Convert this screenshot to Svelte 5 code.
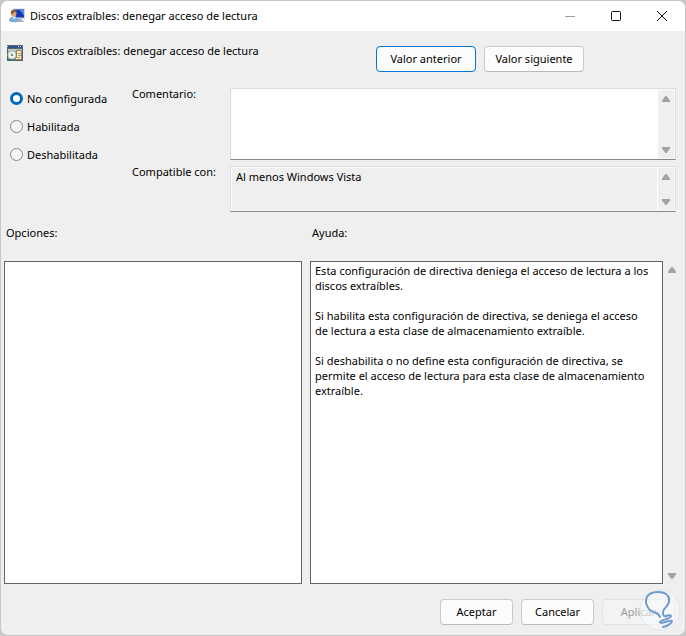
<script lang="ts">
  const title = 'Discos extraíbles: denegar acceso de lectura';

  const states = [
    { value: 'none', label: 'No configurada' },
    { value: 'enabled', label: 'Habilitada' },
    { value: 'disabled', label: 'Deshabilitada' },
  ];

  const help = [
    'Esta configuración de directiva deniega el acceso de lectura a los discos extraíbles.',
    'Si habilita esta configuración de directiva, se deniega el acceso de lectura a esta clase de almacenamiento extraíble.',
    'Si deshabilita o no define esta configuración de directiva, se permite el acceso de lectura para esta clase de almacenamiento extraíble.',
  ];

  let selected = $state('none');
  let comment = $state('');
</script>

{#snippet scrollbar()}
  <div class="scrollbar">
    <button type="button" aria-label="Desplazar hacia arriba">
      <svg width="8" height="6" viewBox="0 0 8 6"><path d="M3.4 0h1.2L8 4.6V6H0V4.6z" fill="#a3a3a3" /></svg>
    </button>
    <button type="button" aria-label="Desplazar hacia abajo">
      <svg width="8" height="6" viewBox="0 0 8 6"><path d="M3.4 6h1.2L8 1.4V0H0v1.4z" fill="#a3a3a3" /></svg>
    </button>
  </div>
{/snippet}

<div class="window">
  <header class="titlebar">
    <svg width="16" height="16" viewBox="0 0 16 16">
      <path d="M4 .5h12v10.500H4z" fill="#cfd3da" />
      <path d="M5 1.500h10V9.500H5z" fill="#1536b8" />
      <path d="M10 1.500h5v6z" fill="#5585ea" />
      <path d="M9 11h4v1.500l2 .5v1H8z" fill="#aeb1b8" />
      <path d="M0 13c0-3 1.500-4.500 5-4.500s5 1.500 5 4.500c-2 1.800-8 1.800-10 0z" fill="#79aedb" />
      <path d="M3.500 8.500l1.800 3 1.700-3z" fill="#eef6fc" />
      <ellipse cx="4.800" cy="5.600" rx="2.700" ry="3.200" fill="#dba676" />
      <path d="M2 6C1.200 3 2.800 1.500 5 1.800c2 .2 3 1.200 2.600 2.600C6 3.900 4 4 3.500 6.500z" fill="#865f3c" />
    </svg>
    <h1>{title}</h1>
    <div class="controls">
      <button type="button" aria-label="Minimizar" disabled>
        <svg width="12" height="12" viewBox="0 0 12 12"><path d="M1 6.500h10" stroke="#a2a2a2" /></svg>
      </button>
      <button type="button" aria-label="Maximizar">
        <svg width="12" height="12" viewBox="0 0 12 12"><rect x="1.500" y="1.500" width="9" height="9" rx="1" fill="none" stroke="#111" /></svg>
      </button>
      <button type="button" aria-label="Cerrar">
        <svg width="12" height="12" viewBox="0 0 12 12"><path d="M1 1l10 10M11 1L1 11" stroke="#111" /></svg>
      </button>
    </div>
  </header>

  <div class="policy">
    <div class="policy-name">
      <svg width="16" height="16" viewBox="0 0 16 16">
        <rect width="16" height="16" fill="#4f646d" />
        <path d="M1 1h14v2H1z" fill="#34518c" />
        <path d="M0 1h1v1H0zM11 1h1v1h-1zM13 1h1v1h-1z" fill="#d5dce0" />
        <path d="M1 4h14v2H1z" fill="#bfc5c7" />
        <path d="M1 6h14v8H1z" fill="#8d999c" />
        <circle cx="5" cy="10" r="4" fill="#f0f4ef" stroke="#b4c4b6" />
        <path d="M5 10l-3-2.500L4 6z" fill="#c5e3c3" />
        <circle cx="5" cy="10" r="1" fill="#53645b" />
        <path d="M9.500 5.500h5v9h-6v-2h1z" fill="#f8eccb" stroke="#96805a" />
        <path d="M11 8.500h3M11 10.500h3M10 12.500h3" stroke="#a8946c" />
        <path d="M0 15h8v1H0z" fill="#267b83" />
      </svg>
      <span>{title}</span>
    </div>
    <div class="policy-nav">
      <button type="button" class="btn wide primary">Valor anterior</button>
      <button type="button" class="btn wide">Valor siguiente</button>
    </div>
  </div>

  <div class="settings">
    <div class="states" role="radiogroup" aria-label="Estado">
      {#each states as state}
        <label>
          <input type="radio" name="state" value={state.value} bind:group={selected} />
          {state.label}
        </label>
      {/each}
    </div>

    <div class="fields">
      <label for="comment">Comentario:</label>
      <div class="field comment">
        <textarea id="comment" bind:value={comment}></textarea>
        {@render scrollbar()}
      </div>
      <label for="supported">Compatible con:</label>
      <div class="field supported">
        <textarea id="supported" readonly value="Al menos Windows Vista"></textarea>
        {@render scrollbar()}
      </div>
    </div>
  </div>

  <main class="panels">
    <section>
      <h2>Opciones:</h2>
      <div class="box"></div>
    </section>
    <section>
      <h2>Ayuda:</h2>
      <div class="help">
        <div class="box">
          {#each help as paragraph}
            <p>{paragraph}</p>
          {/each}
        </div>
        {@render scrollbar()}
      </div>
    </section>
  </main>

  <footer>
    <button type="button" class="btn">Aceptar</button>
    <button type="button" class="btn">Cancelar</button>
    <button type="button" class="btn" disabled>Aplicar</button>
    <svg class="badge" width="42" height="42" viewBox="0 0 42 42">
      <circle cx="21" cy="21" r="20" fill="#f9fbfd" fill-opacity=".5" stroke="#dce5ee" />
      <path
        d="M21 28C19 22 14 25 10 20C4 12 7 3 19 3C28 3 31 8 30 13C29 18 23 20 24 24C24 26 25 28 27 27C29 26 32 26 32 27C32 30 21 31 21 33C21 36 32 30 33 32C33 34 29 37 24 38"
        fill="none"
        stroke="#6f9bcb"
        stroke-width="2"
        stroke-linecap="round"
        stroke-linejoin="round"
      />
    </svg>
  </footer>
</div>

<style>
  :global(body) {
    margin: 0;
    background: #c8c8c8;
  }

  .window {
    display: flex;
    flex-direction: column;
    box-sizing: border-box;
    min-height: 100vh;
    border: 1px solid #c8c8c8;
    border-radius: 8px;
    background: #efefef;
    color: #000;
    font: 11px/15px 'Noto Sans', 'Open Sans', sans-serif;
    overflow: hidden;
  }

  button,
  textarea {
    font: inherit;
    color: inherit;
  }

  h1,
  h2 {
    margin: 0;
    font-size: 11px;
    font-weight: 400;
  }

  .titlebar {
    display: flex;
    align-items: center;
    height: 30px;
    padding-left: 8px;
    gap: 5px;
    background: #fff;
  }

  .titlebar h1 {
    padding-bottom: 2px;
  }

  .controls {
    display: flex;
    align-self: stretch;
    margin-left: auto;
  }

  .controls button {
    display: grid;
    place-items: center;
    width: 46px;
    padding: 0;
    border: 0;
    background: none;
  }

  .policy {
    display: grid;
    grid-template-columns: 375fr 309fr;
    padding-top: 12px;
  }

  .policy-name {
    display: flex;
    gap: 8px;
    padding-left: 6px;
  }

  .policy-name svg {
    margin-top: 2px;
  }

  .policy-nav {
    display: flex;
    gap: 8px;
    padding-top: 3px;
  }

  .btn {
    width: 73px;
    height: 26px;
    padding: 0 0 2px;
    border: 1px solid #cacaca;
    border-bottom-color: #bababa;
    border-radius: 4px;
    background: #fcfcfc;
  }

  .btn.wide {
    width: 100px;
  }

  .btn.primary {
    border-color: #0078d4;
  }

  .btn:disabled {
    border-color: #e0e0e0;
    background: #f3f3f3;
    color: #9c9c9c;
  }

  .settings {
    display: grid;
    grid-template-columns: 122px 1fr;
    padding: 14px 9px 0;
  }

  .states {
    display: flex;
    flex-direction: column;
    gap: 13px;
    padding-top: 5px;
  }

  .states label {
    display: flex;
    align-items: center;
    gap: 4px;
  }

  .states input {
    appearance: none;
    box-sizing: border-box;
    width: 13px;
    height: 13px;
    margin: 0;
    border: 1px solid #868686;
    border-radius: 50%;
    background: #f5f5f5;
  }

  .states input:checked {
    border: 3px solid #0067c0;
    background: #fff;
  }

  .fields {
    display: grid;
    grid-template-columns: 98px 1fr;
    row-gap: 4px;
  }

  .field {
    display: flex;
    box-sizing: border-box;
    margin-top: 2px;
    padding: 1px;
    border: 1px solid #dedede;
    border-bottom-color: #868686;
    background: #efefef;
    box-shadow: inset 0 0 0 1px #fafafa;
  }

  .field.comment {
    height: 72px;
  }

  .field.supported {
    height: 46px;
  }

  .field textarea {
    flex: 1;
    min-width: 0;
    padding: 1px 4px;
    border: 0;
    outline: 0;
    background: transparent;
    resize: none;
    overflow: hidden;
  }

  .comment textarea {
    background: #fff;
  }

  .supported textarea {
    border-right: 1px solid #fff;
  }

  .scrollbar {
    display: flex;
    flex-direction: column;
    justify-content: space-between;
    width: 16px;
  }

  .scrollbar button {
    display: grid;
    place-items: center;
    height: 17px;
    padding: 0;
    border: 0;
    background: none;
  }

  .panels {
    display: grid;
    grid-template-columns: 298fr 371fr;
    flex: 1;
    gap: 8px;
    padding: 13px 4px 0 3px;
  }

  section {
    display: flex;
    flex-direction: column;
  }

  h2 {
    padding: 0 2px 21px;
    line-height: 15px;
  }

  .box {
    flex: 1;
    box-sizing: border-box;
    padding: 1px 10px 1px 4px;
    border: 1px solid #646464;
    background: #fff;
  }

  .help {
    display: flex;
    flex: 1;
  }

  .help .scrollbar {
    padding: 0 1px;
  }

  .help p {
    margin: 0 0 15px;
  }

  footer {
    position: relative;
    display: flex;
    justify-content: flex-end;
    gap: 8px;
    padding: 15px 10px 10px;
  }

  .badge {
    position: absolute;
    right: 4px;
    bottom: 4px;
  }
</style>
